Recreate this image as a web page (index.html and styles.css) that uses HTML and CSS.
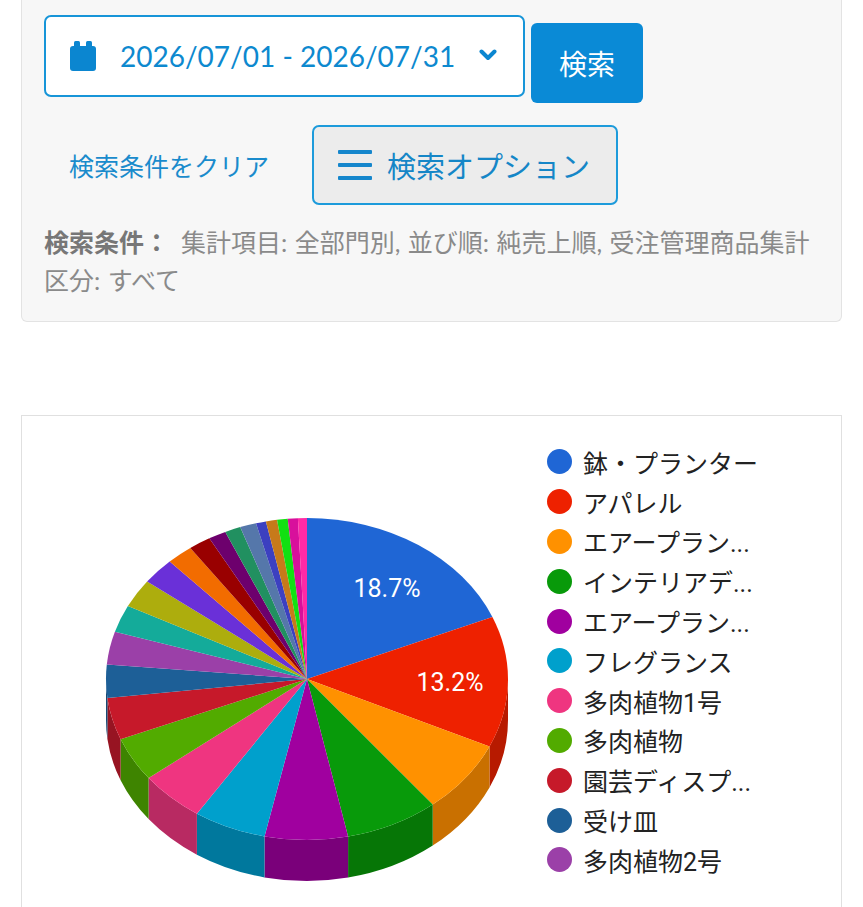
FILE: index.html
```html
<!DOCTYPE html>
<html lang="ja">
<head>
<meta charset="utf-8">
<title>集計</title>
<link rel="stylesheet" href="styles.css">
</head>
<body>
<div class="page">
  <section class="search-panel">
    <div class="search-row">
      <div class="date-range">
        <svg class="cal-icon" width="26" height="30" viewBox="0 0 26 30">
          <rect x="0" y="5" width="26" height="25" rx="3"/>
          <rect x="4" y="0" width="6" height="9" rx="1.5"/>
          <rect x="16" y="0" width="6" height="9" rx="1.5"/>
        </svg>
        <span class="date-text">2026/07/01 - 2026/07/31</span>
        <svg class="chevron" width="18" height="12" viewBox="0 0 18 12">
          <path d="M2.5 2.5 L9 9 L15.5 2.5"/>
        </svg>
      </div>
      <button class="btn-search" type="button">検索</button>
    </div>
    <div class="option-row">
      <a class="clear-link" href="#">検索条件をクリア</a>
      <button class="btn-options" type="button">
        <svg class="menu-icon" width="34" height="30" viewBox="0 0 34 30">
          <rect x="0" y="0" width="34" height="4" rx="1"/>
          <rect x="0" y="13" width="34" height="4" rx="1"/>
          <rect x="0" y="26" width="34" height="4" rx="1"/>
        </svg>
        <span>検索オプション</span>
      </button>
    </div>
    <p class="conditions"><strong class="cond-label">検索条件：</strong><span class="cond-value">集計項目: 全部門別, 並び順: 純売上順, 受注管理商品集計区分: すべて</span></p>
  </section>

  <section class="chart-card">
    <svg class="pie" width="500" height="480" viewBox="22 416 500 480">
      <g class="sides">
        <path class="s2" d="M508,679 A201,161 0 0 1 489.5,746.5 L489.5,787.5 A201,161 0 0 0 508,720 Z"/>
        <path class="s3" d="M489.5,746.5 A201,161 0 0 1 432.7,804.6 L432.7,845.6 A201,161 0 0 0 489.5,787.5 Z"/>
        <path class="s4" d="M432.7,804.6 A201,161 0 0 1 348.1,836.6 L348.1,877.6 A201,161 0 0 0 432.7,845.6 Z"/>
        <path class="s5" d="M348.1,836.6 A201,161 0 0 1 264.5,836.4 L264.5,877.4 A201,161 0 0 0 348.1,877.6 Z"/>
        <path class="s6" d="M264.5,836.4 A201,161 0 0 1 196.9,813.7 L196.9,854.7 A201,161 0 0 0 264.5,877.4 Z"/>
        <path class="s7" d="M196.9,813.7 A201,161 0 0 1 148.6,778.1 L148.6,819.1 A201,161 0 0 0 196.9,854.7 Z"/>
        <path class="s8" d="M148.6,778.1 A201,161 0 0 1 120.6,739.3 L120.6,780.3 A201,161 0 0 0 148.6,819.1 Z"/>
        <path class="s9" d="M120.6,739.3 A201,161 0 0 1 107.4,698.1 L107.4,739.1 A201,161 0 0 0 120.6,780.3 Z"/>
        <path class="s10" d="M107.4,698.1 A201,161 0 0 1 106,679 L106,720 A201,161 0 0 0 107.4,739.1 Z"/>
      </g>
      <g class="tops">
        <path class="c1" d="M307,679 L307,518 A201,161 0 0 1 492.4,616.9 Z"/>
        <path class="c2" d="M307,679 L492.4,616.9 A201,161 0 0 1 489.5,746.5 Z"/>
        <path class="c3" d="M307,679 L489.5,746.5 A201,161 0 0 1 432.7,804.6 Z"/>
        <path class="c4" d="M307,679 L432.7,804.6 A201,161 0 0 1 348.1,836.6 Z"/>
        <path class="c5" d="M307,679 L348.1,836.6 A201,161 0 0 1 264.5,836.4 Z"/>
        <path class="c6" d="M307,679 L264.5,836.4 A201,161 0 0 1 196.9,813.7 Z"/>
        <path class="c7" d="M307,679 L196.9,813.7 A201,161 0 0 1 148.6,778.1 Z"/>
        <path class="c8" d="M307,679 L148.6,778.1 A201,161 0 0 1 120.6,739.3 Z"/>
        <path class="c9" d="M307,679 L120.6,739.3 A201,161 0 0 1 107.4,698.1 Z"/>
        <path class="c10" d="M307,679 L107.4,698.1 A201,161 0 0 1 106.8,664.4 Z"/>
        <path class="c11" d="M307,679 L106.8,664.4 A201,161 0 0 1 114.9,631.7 Z"/>
        <path class="c12" d="M307,679 L114.9,631.7 A201,161 0 0 1 127.9,605.9 Z"/>
        <path class="c13" d="M307,679 L127.9,605.9 A201,161 0 0 1 147.1,581.4 Z"/>
        <path class="c14" d="M307,679 L147.1,581.4 A201,161 0 0 1 169.7,561.4 Z"/>
        <path class="c15" d="M307,679 L169.7,561.4 A201,161 0 0 1 190.3,547.9 Z"/>
        <path class="c16" d="M307,679 L190.3,547.9 A201,161 0 0 1 209.3,538.3 Z"/>
        <path class="c17" d="M307,679 L209.3,538.3 A201,161 0 0 1 225.3,531.9 Z"/>
        <path class="c18" d="M307,679 L225.3,531.9 A201,161 0 0 1 240.2,527.1 Z"/>
        <path class="c19" d="M307,679 L240.2,527.1 A201,161 0 0 1 256,523.3 Z"/>
        <path class="c20" d="M307,679 L256,523.3 A201,161 0 0 1 265.9,521.4 Z"/>
        <path class="c21" d="M307,679 L265.9,521.4 A201,161 0 0 1 277,519.8 Z"/>
        <path class="c22" d="M307,679 L277,519.8 A201,161 0 0 1 287.7,518.7 Z"/>
        <path class="c23" d="M307,679 L287.7,518.7 A201,161 0 0 1 297.9,518.2 Z"/>
        <path class="c24" d="M307,679 L297.9,518.2 A201,161 0 0 1 307,518 Z"/>
      </g>
      <text class="pie-label" x="387" y="597">18.7%</text>
      <text class="pie-label" x="450" y="691">13.2%</text>
    </svg>

    <ul class="legend">
      <li><span class="dot c1"></span>鉢・プランター</li>
      <li><span class="dot c2"></span>アパレル</li>
      <li><span class="dot c3"></span>エアープラン...</li>
      <li><span class="dot c4"></span>インテリアデ...</li>
      <li><span class="dot c5"></span>エアープラン...</li>
      <li><span class="dot c6"></span>フレグランス</li>
      <li><span class="dot c7"></span>多肉植物1号</li>
      <li><span class="dot c8"></span>多肉植物</li>
      <li><span class="dot c9"></span>園芸ディスプ...</li>
      <li><span class="dot c10"></span>受け皿</li>
      <li><span class="dot c11"></span>多肉植物2号</li>
    </ul>
  </section>
</div>
</body>
</html>
```

FILE: styles.css
```css
html, body {
  margin: 0;
  padding: 0;
  background: #ffffff;
}

body {
  font-family: Lato, "Noto Sans CJK JP", sans-serif;
  overflow: hidden;
}

.page {
  padding: 0 21px;
}

/* ---------- search panel ---------- */
.search-panel {
  background: #f7f7f7;
  border: 1px solid #e3e3e3;
  border-top: 0;
  border-radius: 0 0 6px 6px;
  padding: 15px 22px 22px;
}

.search-row {
  display: flex;
  align-items: flex-start;
  gap: 6px;
}

.date-range {
  box-sizing: border-box;
  width: 481px;
  height: 82px;
  display: flex;
  align-items: center;
  padding: 0 26px 0 24px;
  background: #ffffff;
  border: 2px solid #1795d8;
  border-radius: 7px;
  color: #0d89cf;
}

.cal-icon {
  flex: none;
  fill: #0b86d0;
}

.date-text {
  margin-left: 24px;
  font-size: 28px;
  line-height: 1;
  white-space: nowrap;
}

.chevron {
  flex: none;
  margin-left: auto;
  margin-top: -2px;
  fill: none;
  stroke: #0b86d0;
  stroke-width: 4;
  stroke-linecap: round;
  stroke-linejoin: round;
}

.btn-search {
  margin-top: 8px;
  width: 112px;
  height: 80px;
  border: 0;
  border-radius: 6px;
  background: #0a8ad6;
  color: #ffffff;
  font-family: inherit;
  font-size: 28px;
  padding: 0;
}

.option-row {
  display: flex;
  align-items: center;
  margin-top: 22px;
}

.clear-link {
  margin-left: 25px;
  font-size: 25px;
  color: #1a8bcc;
  text-decoration: none;
  white-space: nowrap;
}

.btn-options {
  box-sizing: border-box;
  margin-left: 43px;
  width: 306px;
  height: 80px;
  display: flex;
  align-items: center;
  gap: 15px;
  padding: 0 0 0 24px;
  background: #ececec;
  border: 2px solid #1d9bdb;
  border-radius: 7px;
  color: #1586c7;
  font-family: inherit;
  font-size: 29px;
  white-space: nowrap;
}

.menu-icon {
  flex: none;
  fill: #1586cc;
}

.conditions {
  margin: 18px 0 0;
  font-size: 25px;
  line-height: 38px;
  color: #8a8a8a;
}

.cond-label {
  color: #777777;
  font-weight: 700;
  margin-right: 12px;
}

.cond-value {
  word-spacing: 1px;
}

/* ---------- chart card ---------- */
.chart-card {
  margin-top: 93px;
  height: 520px;
  display: flex;
  align-items: flex-start;
  background: #ffffff;
  border: 1px solid #e0e0e0;
}

.pie {
  flex: none;
  display: block;
}

.pie-label {
  font-family: Roboto, sans-serif;
  font-size: 25px;
  fill: #ffffff;
  text-anchor: middle;
}

.legend {
  list-style: none;
  margin: 26px 0 0 25px;
  padding: 0;
}

.legend li {
  display: flex;
  align-items: center;
  gap: 11px;
  height: 39.8px;
  font-family: Roboto, "Noto Sans CJK JP", sans-serif;
  font-size: 25px;
  color: #222222;
  white-space: nowrap;
}

.dot {
  flex: none;
  width: 25px;
  height: 25px;
  border-radius: 50%;
}

/* slice colours (top faces + legend dots) */
.c1  { fill: #1f66d5; background: #1f66d5; }
.c2  { fill: #ee2100; background: #ee2100; }
.c3  { fill: #ff9100; background: #ff9100; }
.c4  { fill: #089a0a; background: #089a0a; }
.c5  { fill: #a0009f; background: #a0009f; }
.c6  { fill: #00a0cc; background: #00a0cc; }
.c7  { fill: #ef3580; background: #ef3580; }
.c8  { fill: #52ab00; background: #52ab00; }
.c9  { fill: #c6192a; background: #c6192a; }
.c10 { fill: #1d5f97; background: #1d5f97; }
.c11 { fill: #9b40a8; background: #9b40a8; }
.c12 { fill: #14ab9a; background: #14ab9a; }
.c13 { fill: #adad0d; background: #adad0d; }
.c14 { fill: #6a30d8; background: #6a30d8; }
.c15 { fill: #f26c00; background: #f26c00; }
.c16 { fill: #990000; background: #990000; }
.c17 { fill: #6d006d; background: #6d006d; }
.c18 { fill: #219060; background: #219060; }
.c19 { fill: #5577aa; background: #5577aa; }
.c20 { fill: #3c40c0; background: #3c40c0; }
.c21 { fill: #c77a1a; background: #c77a1a; }
.c22 { fill: #12e012; background: #12e012; }
.c23 { fill: #d8109c; background: #d8109c; }
.c24 { fill: #ff2aa6; background: #ff2aa6; }

/* darker side walls of the 3D pie */
.s2  { fill: #b71a00; }
.s3  { fill: #c97000; }
.s4  { fill: #067606; }
.s5  { fill: #7a007a; }
.s6  { fill: #00789d; }
.s7  { fill: #b82a62; }
.s8  { fill: #3e8400; }
.s9  { fill: #971422; }
.s10 { fill: #164a76; }
```
